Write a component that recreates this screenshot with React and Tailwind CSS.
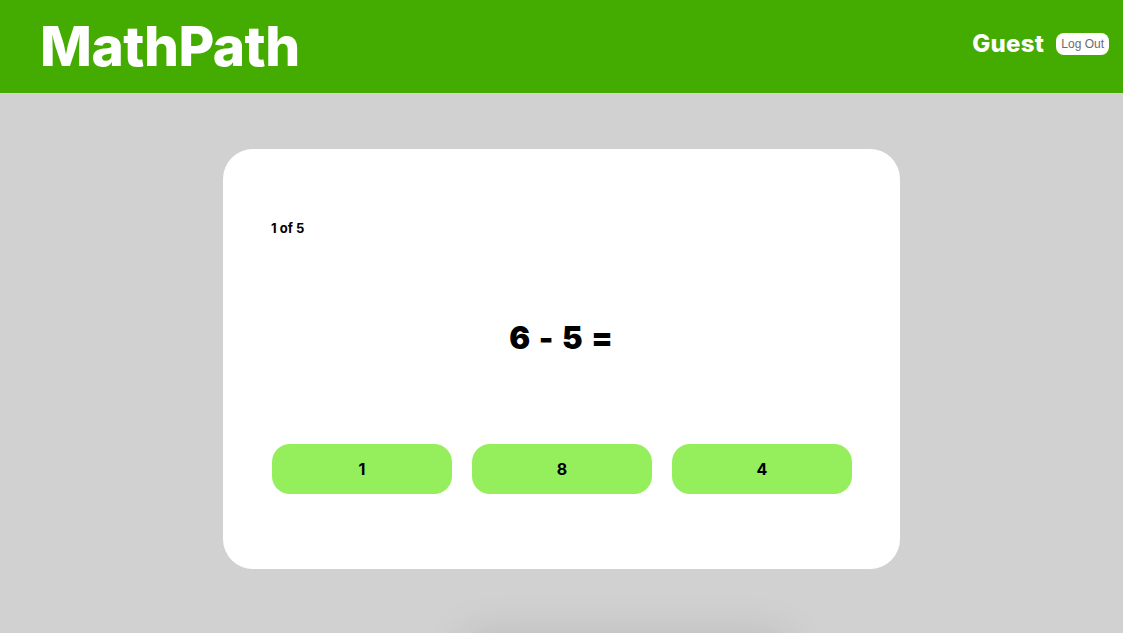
const answers = [1, 8, 4];

const App = () => {
    return (
        <div className="h-screen bg-[#d1d1d1] overflow-hidden" style={{ fontFamily: 'Inter, "Noto Sans", sans-serif' }}>
            <header className="h-[93px] bg-[#44ab00] flex items-center justify-between pl-[40px] pr-[14px]">
                <h1 className="text-[55px] leading-none font-extrabold text-white tracking-[-0.5px]">MathPath</h1>
                <div className="flex items-center gap-[12px] mt-[-6px]">
                    <span className="text-[24px] font-extrabold text-white tracking-[0.3px]">Guest</span>
                    <button className="bg-white text-[#6b6b6b] text-[12px] px-[5px] h-[22px] rounded-[8px]" style={{ fontFamily: '"Liberation Sans", Arial, sans-serif' }}>
                        Log Out
                    </button>
                </div>
            </header>

            <main className="flex flex-col items-center pt-[56px]">
                <div className="w-[677px] h-[420px] bg-white rounded-[30px] px-[48px] pt-[71px]">
                    <p className="text-[13px] leading-[16px] font-bold text-black">1 of 5</p>
                    <div className="mt-[84px] text-center text-[31px] leading-[36px] font-black text-black tracking-[1.2px]">
                        6 - 5 =
                    </div>
                    <div className="mt-[88px] ml-[1px] flex gap-[20px]">
                        {answers.map((a) => (
                            <button key={a} className="w-[180px] h-[50px] rounded-[18px] bg-[#95ee5b] text-[16px] font-bold text-black">
                                {a}
                            </button>
                        ))}
                    </div>
                </div>
                <div className="mt-[68px] ml-[128px] w-[320px] h-[60px] bg-[#d1d1d1] shadow-[0_0_45px_rgba(0,0,0,0.13)]"></div>
            </main>
        </div>
    );
};

export default App;
